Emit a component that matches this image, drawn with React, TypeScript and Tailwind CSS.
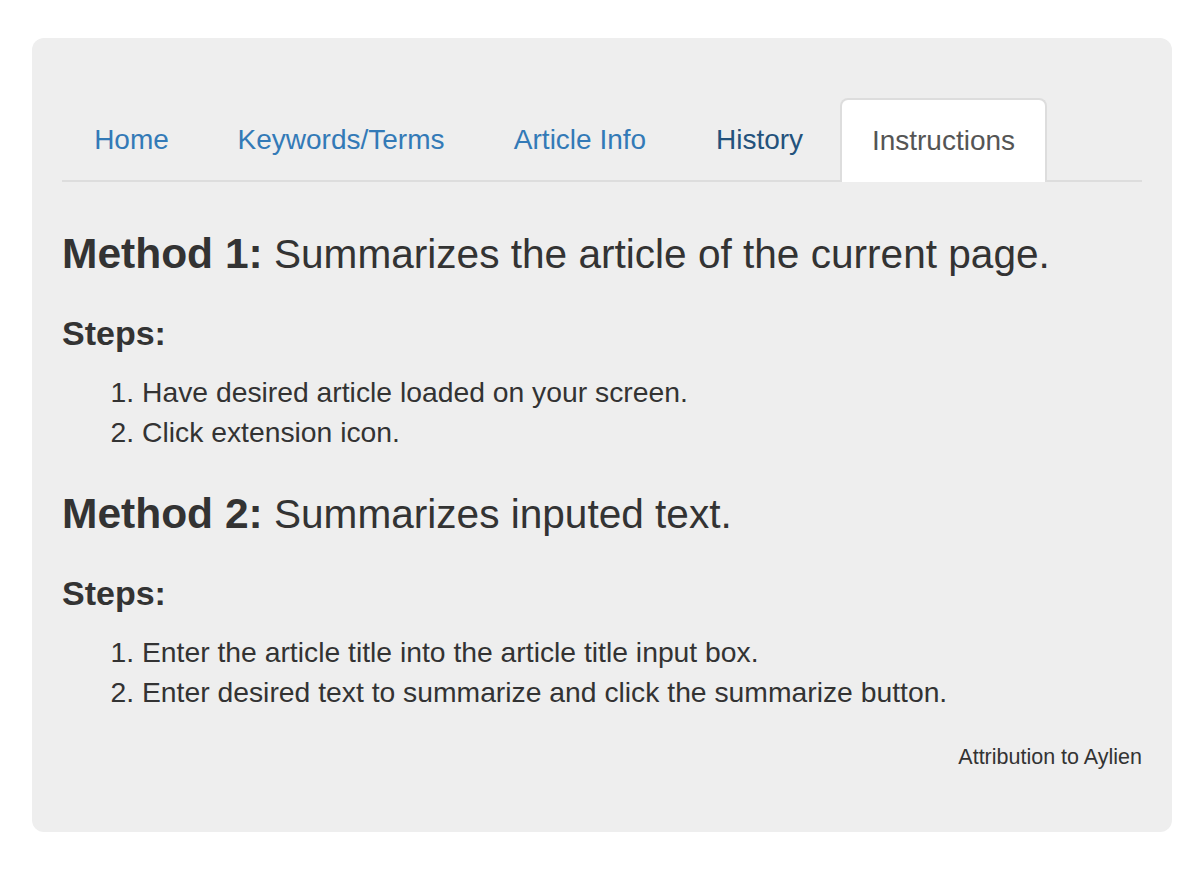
const tabs = [
	{ label: 'Home', width: 'w-[139px]', color: 'text-[#337ab7]' },
	{ label: 'Keywords/Terms', width: 'w-[272px]', color: 'text-[#337ab7]' },
	{ label: 'Article Info', width: 'w-[198px]', color: 'text-[#337ab7]' },
	{ label: 'History', width: 'w-[153px]', color: 'text-[#23527c]' },
];

function Steps({ items }: { items: string[] }) {
	return (
		<>
			<h4 className="mt-[27px] text-[34px] font-bold leading-[44px]">Steps:</h4>
			<ol className="mt-[17px] list-decimal pl-[80px] text-[28.3px] leading-[40px]">
				{items.map((item) => (
					<li key={item}>{item}</li>
				))}
			</ol>
		</>
	);
}

export default function App() {
	return (
		<div className="min-h-[894px] bg-white pl-[32px] pt-[38px] font-['Liberation_Sans',Arial,sans-serif] text-[#333]">
			<div className="h-[794px] w-[1140px] rounded-[12px] bg-[#eee] px-[30px] pt-[60px]">
				<ul className="flex border-b-2 border-[#ddd]">
					{tabs.map((tab) => (
						<li
							key={tab.label}
							className={`-mb-[2px] mr-[4px] flex h-[84px] items-center justify-center text-[28px] ${tab.width} ${tab.color}`}
						>
							{tab.label}
						</li>
					))}
					<li className="-mb-[2px] flex h-[84px] w-[207px] items-center justify-center rounded-t-[8px] border-2 border-b-0 border-[#ddd] bg-white text-[28px] text-[#555]">
						Instructions
					</li>
				</ul>

				<p className="mt-[42px] text-[40.6px] leading-[60px]">
					<b className="text-[42.5px]">Method 1:</b> Summarizes the article of the current page.
				</p>
				<Steps
					items={[
						'Have desired article loaded on your screen.',
						'Click extension icon.',
					]}
				/>

				<p className="mt-[32px] text-[40.6px] leading-[60px]">
					<b className="text-[42.5px]">Method 2:</b> Summarizes inputed text.
				</p>
				<Steps
					items={[
						'Enter the article title into the article title input box.',
						'Enter desired text to summarize and click the summarize button.',
					]}
				/>

				<p className="mt-[30px] text-right text-[21.5px] leading-[30px]">Attribution to Aylien</p>
			</div>
		</div>
	);
}
